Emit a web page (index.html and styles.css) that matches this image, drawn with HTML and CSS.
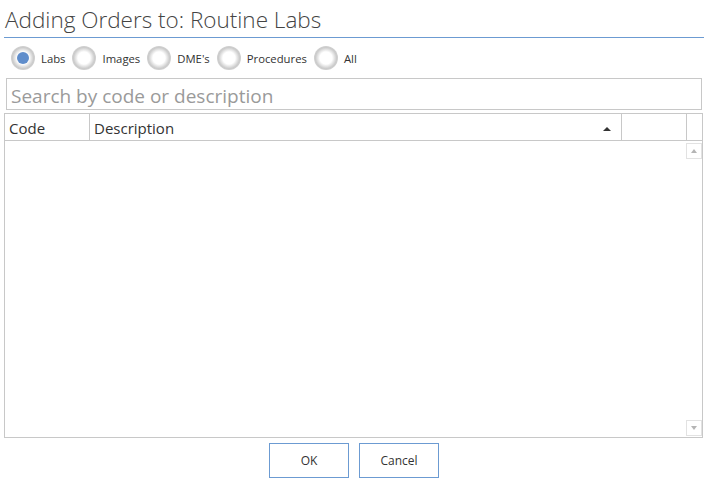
FILE: index.html
```html
<!DOCTYPE html>
<html>
<head>
<meta charset="utf-8">
<link rel="stylesheet" href="styles.css">
</head>
<body>
<div class="dialog">
  <h1 class="title">Adding Orders to: Routine Labs</h1>
  <div class="radios">
    <label class="radio"><span class="dot checked"></span><span class="rlabel">Labs</span></label>
    <label class="radio"><span class="dot"></span><span class="rlabel">Images</span></label>
    <label class="radio"><span class="dot"></span><span class="rlabel">DME's</span></label>
    <label class="radio"><span class="dot"></span><span class="rlabel">Procedures</span></label>
    <label class="radio"><span class="dot"></span><span class="rlabel">All</span></label>
  </div>
  <div class="search"><input class="search-input" type="text" placeholder="Search by code or description"></div>
  <div class="grid">
    <div class="ghead">
      <div class="hc c-code">Code</div>
      <div class="hc c-desc"><span>Description</span><span class="sort"></span></div>
      <div class="hc c-blank"></div>
      <div class="hc c-last"></div>
    </div>
    <div class="gbody">
      <div class="rows"></div>
      <div class="scroll">
        <span class="sbtn"><span class="tri up"></span></span>
        <span class="sbtn"><span class="tri down"></span></span>
      </div>
    </div>
  </div>
  <div class="actions">
    <button class="btn">OK</button>
    <button class="btn">Cancel</button>
  </div>
</div>
</body>
</html>
```
FILE: styles.css
```css
html, body {
  margin: 0;
  padding: 0;
  background: #fff;
}
body {
  font-family: "Open Sans", "Noto Sans", sans-serif;
  color: #333;
  width: 708px;
  height: 488px;
}
.dialog {
  display: flex;
  flex-direction: column;
}
.title {
  margin: 0 4px;
  padding: 0 0 0 1px;
  height: 37px;
  border-bottom: 1px solid #6c9bd2;
  font-weight: 300;
  font-size: 22.5px;
  line-height: 40px;
  color: #444;
  white-space: nowrap;
}
.radios {
  display: flex;
  align-items: center;
  height: 34px;
  padding-left: 11px;
  margin-top: 3px;
}
.radio {
  display: flex;
  align-items: center;
  margin-right: 7px;
}
.dot {
  width: 24px;
  height: 24px;
  border-radius: 50%;
  background: radial-gradient(circle, #fff 0, #fff 36%, #cbcbcb 62%, #d6d6d6 80%, #eaeaea 100%);
  display: flex;
  align-items: center;
  justify-content: center;
}
.dot.checked::after {
  content: "";
  width: 12px;
  height: 12px;
  border-radius: 50%;
  background: #5f8dcb;
}
.rlabel {
  margin-left: 6px;
  font-size: 11.3px;
  color: #333;
}
.search {
  margin: 3px 6px 0 6px;
  display: flex;
}
.search-input {
  flex: 1;
  height: 32px;
  box-sizing: border-box;
  border: 1px solid #c8c8c8;
  padding: 4px 0 0 4px;
  font-family: "Open Sans", "Noto Sans", sans-serif;
  font-size: 19px;
  color: #333;
  outline: none;
}
.search-input::placeholder {
  color: #9a9a9a;
}
.grid {
  margin: 3px 5px 0 4px;
  border: 1px solid #c8c8c8;
  height: 323px;
  display: flex;
  flex-direction: column;
}
.ghead {
  display: grid;
  grid-template-columns: 85px 532px 65px 1fr;
  height: 26px;
  border-bottom: 1px solid #c8c8c8;
}
.hc {
  border-right: 1px solid #c8c8c8;
  font-size: 15px;
  line-height: 24px;
  padding-top: 2px;
  padding-left: 4px;
  color: #333;
}
.c-last {
  border-right: none;
}
.c-desc {
  display: flex;
  justify-content: space-between;
  align-items: flex-start;
  padding-right: 10px;
}
.sort {
  width: 0;
  height: 0;
  margin-top: 11px;
  border-left: 4px solid transparent;
  border-right: 4px solid transparent;
  border-bottom: 4px solid #333;
}
.gbody {
  flex: 1;
  display: flex;
}
.rows {
  flex: 1;
}
.scroll {
  width: 16px;
  padding: 2px 0 1px;
  display: flex;
  flex-direction: column;
  justify-content: space-between;
}
.sbtn {
  width: 14px;
  height: 14px;
  border: 1px solid #e2e2e2;
  display: flex;
  align-items: center;
  justify-content: center;
}
.tri {
  width: 0;
  height: 0;
  border-left: 3.5px solid transparent;
  border-right: 3.5px solid transparent;
}
.tri.up {
  border-bottom: 4px solid #b5b5b5;
}
.tri.down {
  border-top: 4px solid #b5b5b5;
}
.actions {
  display: flex;
  justify-content: center;
  gap: 10px;
  margin-top: 5px;
}
.btn {
  width: 80px;
  height: 35px;
  background: #fff;
  border: 1px solid #6c9bd2;
  font-family: "Open Sans", "Noto Sans", sans-serif;
  font-size: 12px;
  color: #333;
  padding: 0;
}
```
